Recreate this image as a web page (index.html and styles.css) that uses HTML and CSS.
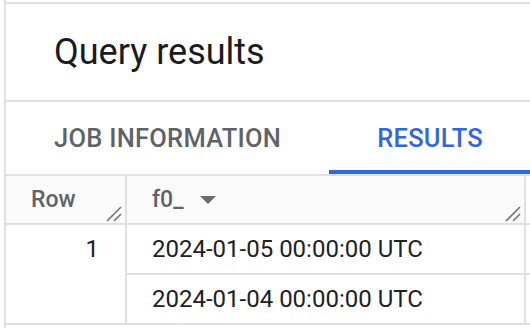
FILE: index.html
```html
<!DOCTYPE html>
<html lang="en">
<head>
    <meta charset="UTF-8">
    <meta name="viewport" content="width=device-width, initial-scale=1.0">
    <title>Query results</title>
    <link rel="stylesheet" href="styles.css">
</head>
<body>
    <div class="page">
        <div class="panel">
            <div class="title">Query results</div>

            <div class="tabs">
                <div class="tab">JOB INFORMATION</div>
                <div class="tab active">RESULTS</div>
            </div>

            <div class="grid">
                <div class="cell head num">
                    Row
                    <svg class="handle" width="16" height="16" viewBox="0 0 16 16"><path d="M1 15 L15 1 M8 15 L15 8" stroke="#757575" stroke-width="1.6" fill="none"/></svg>
                </div>
                <div class="cell head">
                    f0_
                    <svg class="arrow" width="16" height="8" viewBox="0 0 16 8"><path d="M0 0 H16 L8 8 Z" fill="#6b6b6b"/></svg>
                    <svg class="handle" width="16" height="16" viewBox="0 0 16 16"><path d="M1 15 L15 1 M8 15 L15 8" stroke="#757575" stroke-width="1.6" fill="none"/></svg>
                </div>
                <div class="cell filler"></div>

                <div class="cell num rowspan">1</div>
                <div class="cell">2024-01-05 00:00:00 UTC</div>
                <div class="cell filler"></div>
                <div class="cell">2024-01-04 00:00:00 UTC</div>
                <div class="cell filler"></div>
            </div>
        </div>
    </div>
</body>
</html>
```

FILE: styles.css
```css
body {
    margin: 0;
    width: 530px;
    height: 328px;
    overflow: hidden;
    background: white;
    font-family: Roboto, "Liberation Sans", sans-serif;
}

.page {
    margin-left: 4px;
    height: 328px;
    padding-top: 2px;
    box-sizing: border-box;
    border-left: 2px solid #e0e0e0;
}

.panel {
    border-top: 2px solid #e0e0e0;
}

.title {
    height: 96px;
    display: flex;
    align-items: center;
    padding-left: 48px;
    font-size: 36px;
    color: #1b1b1b;
    border-bottom: 2px solid #e0e0e0;
}

.tabs {
    display: flex;
    height: 72px;
    border-bottom: 2px solid #e0e0e0;
}

.tab {
    display: flex;
    align-items: center;
    flex-shrink: 0;
    white-space: nowrap;
    padding: 0 48px;
    font-size: 25.5px;
    font-weight: 500;
    letter-spacing: 0.25px;
    color: #5f6368;
}

.tab.active {
    flex: 1 0 auto;
    color: #3367d6;
    box-shadow: inset 0 -4px 0 #3367d6;
}

/* таблиця результатів */
.grid {
    display: grid;
    grid-template-columns: 121px 399px 1fr;
    grid-template-rows: 49px 50px 50px;
}

.cell {
    box-sizing: border-box;
    display: flex;
    align-items: center;
    padding-left: 25px;
    font-size: 24px;
    color: #202124;
    border-right: 2px solid #e0e0e0;
    border-bottom: 2px solid #e0e0e0;
}

.cell.head {
    position: relative;
    background: #fafafa;
    font-size: 23px;
    font-weight: 500;
    color: #5f6368;
}

.cell.num {
    justify-content: flex-end;
    padding-left: 0;
    padding-right: 26px;
}

.cell.head.num {
    justify-content: flex-start;
    padding-left: 25px;
    padding-right: 0;
}

.cell.rowspan {
    grid-row: span 2;
    align-items: flex-start;
    line-height: 48px;
}

.cell.filler {
    border-right: none;
    padding: 0;
}

.arrow {
    margin-left: 16px;
}

.handle {
    position: absolute;
    right: 3px;
    bottom: 1px;
}
```
